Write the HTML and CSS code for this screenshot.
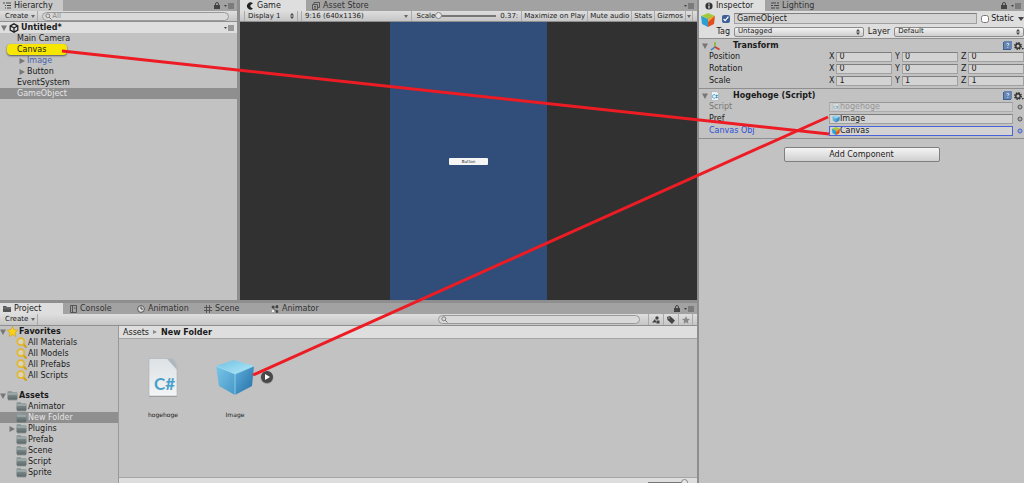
FILE: index.html
```html
<!DOCTYPE html>
<html lang="en">

<head>
    <meta charset="UTF-8" />
    <meta name="viewport" content="width=device-width, initial-scale=1.0" />
    <title>Untitled - Editor</title>
    <link rel="stylesheet" href="styles.css">
</head>

<body>
    <svg class="defs" width="0" height="0" aria-hidden="true">
        <defs>
            <linearGradient id="folderFill" x1="0" y1="0" x2="0" y2="1">
                <stop offset="0" stop-color="#94a0a0" />
                <stop offset="1" stop-color="#5d6a6b" />
            </linearGradient>
            <linearGradient id="cubeTop" x1="0" y1="0" x2="1" y2="1">
                <stop offset="0" stop-color="#6fbfe2" />
                <stop offset="1" stop-color="#b4ebfa" />
            </linearGradient>
            <linearGradient id="cubeLeft" x1="0" y1="0" x2="1" y2="1">
                <stop offset="0" stop-color="#79c6e8" />
                <stop offset="1" stop-color="#4797c7" />
            </linearGradient>
            <linearGradient id="cubeRight" x1="0" y1="0" x2="1" y2="1">
                <stop offset="0" stop-color="#5cb2df" />
                <stop offset="1" stop-color="#266ca3" />
            </linearGradient>
            <linearGradient id="paper" x1="0" y1="0" x2="0" y2="1">
                <stop offset="0" stop-color="#dde2e6" />
                <stop offset="1" stop-color="#f3f4f5" />
            </linearGradient>
        </defs>
        <symbol id="lock" viewBox="0 0 6 7">
            <path d="M1.500 3V2a1.500 1.500 0 0 1 3 0v1" fill="none" stroke="#444" />
            <path d="M0 3h6v4H0z" fill="#444" />
        </symbol>
        <symbol id="menu" viewBox="0 0 10 6">
            <path d="M0 2h3L1.500 4z" fill="#444" />
            <path d="M4 1h6M4 3h6M4 5h6" stroke="#555" />
        </symbol>
        <symbol id="down" viewBox="0 0 4 3">
            <path d="M0 0h4L2 3z" fill="#666" />
        </symbol>
        <symbol id="updown" viewBox="0 0 4 6">
            <path d="M0 2.500 2 0l2 2.500zM0 3.500h4L2 6z" fill="#444" />
        </symbol>
        <symbol id="foldOpen" viewBox="0 0 6 6">
            <path d="M0 .5h6L3 6z" fill="#777" />
        </symbol>
        <symbol id="foldClosed" viewBox="0 0 6 6">
            <path d="M.5 0v6L6 3z" fill="#777" />
        </symbol>
        <symbol id="folder" viewBox="0 0 11 10">
            <path d="M.5 1.500q0-1 1-1h3l1 1.200h4q1 0 1 1V8q0 1-1 1h-8q-1 0-1-1z" fill="url(#folderFill)" />
            <path d="M1 3.500h9" stroke="#b4bebe" />
            <path d="M1 9.300h9" stroke="#4c5757" stroke-width=".6" />
        </symbol>
        <symbol id="find" viewBox="0 0 11 11">
            <path d="m7.500 7.500 2.500 2.500" stroke="#d2a21c" stroke-width="2.200" stroke-linecap="round" />
            <circle cx="4.800" cy="4.600" r="3.500" fill="#d8d4bd" stroke="#e3b62c" stroke-width="1.700" />
        </symbol>
        <symbol id="lens" viewBox="0 0 7 7">
            <circle cx="2.800" cy="2.800" r="2" fill="none" stroke="#777" stroke-width=".9" />
            <path d="m4.300 4.300 2.200 2.200" stroke="#777" />
        </symbol>
        <symbol id="blueCube" viewBox="0 0 40 38">
            <path d="M1 7 19 1l20 6-19 8z" fill="url(#cubeTop)" />
            <path d="m1 7 19 8v21L4 27z" fill="url(#cubeLeft)" />
            <path d="m39 7-19 8v21l17-9z" fill="url(#cubeRight)" />
            <path d="m1 7 19 8 19-8M20 15v21" fill="none" stroke="#a5e0f5" stroke-width=".7" />
        </symbol>
        <symbol id="rgbCube" viewBox="0 0 14 14">
            <path d="M0 3 7 0l7 3-7 3z" fill="#a5c93c" />
            <path d="m0 3 7 3v8l-6-3z" fill="#2d9fd0" />
            <path d="m14 3-7 3v8l6-3z" fill="#e0501c" />
            <path d="m14 3-7 3v3z" fill="#f2a83a" />
        </symbol>
        <symbol id="script" viewBox="0 0 10 11">
            <path d="M1 .5h6l2 2v8H1z" fill="#eef2f4" stroke="#a0a8ac" stroke-width=".7" />
            <path d="M5 4.200a2 2 0 1 0 0 3.600M5.500 5h3M5.500 7h3M6.500 4v4" fill="none" stroke="#2f8fc0" stroke-width=".9" />
        </symbol>
        <symbol id="help" viewBox="0 0 9 9">
            <path d="M0 1h8v8H0z" fill="#3f5f8c" />
            <path d="M1 0h8v8H1z" fill="#6685b2" />
            <path d="M3.500 3q1.500-1.500 2.500 0 0 1-1.200 1.500v.6M4.800 6v.8" fill="none" stroke="#dfe8f4" stroke-width=".9" />
        </symbol>
        <symbol id="gear" viewBox="0 0 10 8">
            <circle cx="4" cy="4" r="3.200" fill="none" stroke="#333" stroke-width="1.500" stroke-dasharray="1.500 1" />
            <circle cx="4" cy="4" r="2.200" fill="none" stroke="#333" stroke-width="1.400" />
            <path d="M7.500 6H10L8.800 7.800z" fill="#333" />
        </symbol>
        <symbol id="pick" viewBox="0 0 6 6">
            <circle cx="3" cy="3" r="2" fill="none" stroke="currentColor" stroke-width=".9" />
            <circle cx="3" cy="3" r=".5" fill="currentColor" />
        </symbol>
    </svg>

    <main class="editor">
        <div class="left">
            <div class="top">
                <section class="panel hierarchy">
                    <div class="tabs">
                        <button class="tab active">
                            <svg width="8" height="7"><path d="M0 1h2M3 1h5M2 3.500h1M4 3.500h4M2 6h1M4 6h4" stroke="#444" /></svg>
                            Hierarchy
                        </button>
                        <svg class="lock"><use href="#lock" /></svg>
                        <svg class="menu"><use href="#menu" /></svg>
                    </div>
                    <div class="toolbar">
                        <button class="tool">Create <svg class="down"><use href="#down" /></svg></button>
                        <label class="search">
                            <svg class="lens"><use href="#lens" /></svg>
                            <input type="text" placeholder="All" aria-label="Search hierarchy" />
                        </label>
                    </div>
                    <div class="scene-row">
                        <svg class="fold"><use href="#foldOpen" /></svg>
                        <svg width="10" height="10" viewBox="0 0 10 10">
                            <path d="M5 .8 8.800 2.800v4.400L5 9.200 1.200 7.200V2.800zM5 5V9M5 5 1.500 3M5 5l3.500-2" fill="none" stroke="#222" stroke-width="1.300" />
                        </svg>
                        <b>Untitled*</b>
                        <svg class="menu"><use href="#menu" /></svg>
                    </div>
                    <ul class="tree">
                        <li>Main Camera</li>
                        <li><span class="marked">Canvas</span></li>
                        <li class="child prefab"><svg class="fold"><use href="#foldClosed" /></svg>Image</li>
                        <li class="child"><svg class="fold"><use href="#foldClosed" /></svg>Button</li>
                        <li>EventSystem</li>
                        <li class="selected">GameObject</li>
                    </ul>
                </section>

                <section class="panel game">
                    <div class="tabs">
                        <button class="tab active">
                            <svg width="8" height="8" viewBox="0 0 8 8"><path d="M7 1.300A3.600 3.600 0 1 0 7 6.700L4.500 5V3z" fill="#222" /></svg>
                            Game
                        </button>
                        <button class="tab">
                            <svg width="8" height="8" viewBox="0 0 8 8"><path d="M.5 2.500h5v5h-5zM2 2.500v-2h5.500v5h-2M2 4.500h2M2 6h2" fill="none" stroke="#555" /></svg>
                            Asset Store
                        </button>
                        <svg class="menu"><use href="#menu" /></svg>
                    </div>
                    <div class="toolbar">
                        <span class="drop display">
                            <select aria-label="Display"><option>Display 1</option></select>
                            <svg class="updown"><use href="#updown" /></svg>
                        </span>
                        <span class="drop aspect">
                            <select aria-label="Aspect"><option>9:16 (640x1136)</option></select>
                            <svg class="down"><use href="#down" /></svg>
                        </span>
                        <label class="scale">Scale <input type="range" min="0" max="10" value="0" /></label>
                        <span class="scale-value">0.37:</span>
                        <button class="tool">Maximize on Play</button>
                        <button class="tool">Mute audio</button>
                        <button class="tool">Stats</button>
                        <button class="tool">Gizmos</button>
                        <button class="tool last" aria-label="Gizmos menu"><svg class="down"><use href="#down" /></svg></button>
                    </div>
                    <div class="view">
                        <div class="screen">
                            <button class="ui-button">Button</button>
                        </div>
                    </div>
                </section>
            </div>

            <section class="panel project">
                <div class="tabs">
                    <button class="tab active">
                        <svg width="8" height="7" viewBox="0 0 8 7"><path d="M0 1h3l1 1h4v5H0z" fill="#555" /><path d="M0 3h8" stroke="#999" stroke-width=".6" /></svg>
                        Project
                    </button>
                    <button class="tab">
                        <svg width="7" height="8" viewBox="0 0 7 8"><path d="M.5.5h6v7h-6zM2.500.5v7M4 3h1.500" fill="none" stroke="#555" /></svg>
                        Console
                    </button>
                    <button class="tab">
                        <svg width="8" height="8" viewBox="0 0 8 8"><circle cx="4" cy="4" r="3.400" fill="#ddd" stroke="#555" /><path d="M4 1.500V4h2" fill="none" stroke="#444" /></svg>
                        Animation
                    </button>
                    <button class="tab">
                        <svg width="8" height="8" viewBox="0 0 8 8"><path d="M2.500 0v8M5.500 0v8M0 2.500h8M0 5.500h8" stroke="#555" /></svg>
                        Scene
                    </button>
                    <button class="tab">
                        <svg width="8" height="8" viewBox="0 0 8 8"><path d="M1 1h2v2H1zM5 .5h2V3H5zM5 5.500h2v2H5z" fill="#444" stroke="#444" stroke-width=".5" /><path d="M1 5h2v2H1z" fill="#eee" /><path d="M3 2h2M2 3l4 3.500" stroke="#444" stroke-width=".7" /></svg>
                        Animator
                    </button>
                    <svg class="lock"><use href="#lock" /></svg>
                    <svg class="menu"><use href="#menu" /></svg>
                </div>
                <div class="toolbar">
                    <button class="tool">Create <svg class="down"><use href="#down" /></svg></button>
                    <label class="search project-search">
                        <svg class="lens"><use href="#lens" /></svg>
                        <input type="text" aria-label="Search project" />
                    </label>
                    <button class="tool icon" aria-label="Filter by type">
                        <svg width="8" height="8" viewBox="0 0 8 8"><circle cx="5" cy="2" r="1.700" fill="#444" /><path d="M0 6.500 3 3l1.500 3.500zM4.500 4.500h3v3h-3z" fill="#444" /></svg>
                    </button>
                    <button class="tool icon" aria-label="Filter by label">
                        <svg width="8" height="8" viewBox="0 0 8 8"><path d="M0 1 3 0l5 4.500-3 3.500L.5 4z" fill="#444" /><circle cx="2" cy="2" r=".7" fill="#ccc" /></svg>
                    </button>
                    <button class="tool icon last" aria-label="Save search">
                        <svg width="8" height="8" viewBox="0 0 10 10"><path d="m5 0 1.400 3.400 3.600.3-2.700 2.400.8 3.600L5 7.800 1.900 9.700l.8-3.600L0 3.700l3.600-.3z" fill="#888" /></svg>
                    </button>
                </div>
                <div class="browser">
                    <div class="folders">
                        <ul class="tree">
                            <li class="root">
                                <svg class="fold"><use href="#foldOpen" /></svg>
                                <svg class="icon" viewBox="0 0 10 10"><path d="m5 .3 1.400 3.100 3.400.4-2.500 2.300.7 3.500L5 7.900 2 9.600l.7-3.500L.2 3.800l3.400-.4z" fill="#fbd21c" stroke="#c99a12" stroke-width=".5" /></svg>
                                <b>Favorites</b>
                            </li>
                            <li><svg class="icon"><use href="#find" /></svg>All Materials</li>
                            <li><svg class="icon"><use href="#find" /></svg>All Models</li>
                            <li><svg class="icon"><use href="#find" /></svg>All Prefabs</li>
                            <li><svg class="icon"><use href="#find" /></svg>All Scripts</li>
                        </ul>
                        <ul class="tree">
                            <li class="root">
                                <svg class="fold"><use href="#foldOpen" /></svg>
                                <svg class="icon"><use href="#folder" /></svg>
                                <b>Assets</b>
                            </li>
                            <li><svg class="icon"><use href="#folder" /></svg>Animator</li>
                            <li class="selected"><svg class="icon"><use href="#folder" /></svg>New Folder</li>
                            <li class="nested"><svg class="fold"><use href="#foldClosed" /></svg><svg class="icon"><use href="#folder" /></svg>Plugins</li>
                            <li><svg class="icon"><use href="#folder" /></svg>Prefab</li>
                            <li><svg class="icon"><use href="#folder" /></svg>Scene</li>
                            <li><svg class="icon"><use href="#folder" /></svg>Script</li>
                            <li><svg class="icon"><use href="#folder" /></svg>Sprite</li>
                        </ul>
                    </div>
                    <div class="files">
                        <nav class="crumbs">
                            <span>Assets</span>
                            <svg width="4" height="4" viewBox="0 0 4 4"><path d="M0 0v4l4-2z" fill="#888" /></svg>
                            <b>New Folder</b>
                        </nav>
                        <div class="grid">
                            <figure class="file">
                                <svg class="thumb" viewBox="0 0 40 40">
                                    <path d="M6 1h23l5 6v32H6z" fill="#999" />
                                    <path d="M6 .5h24l4 6v31.500H6z" fill="url(#paper)" stroke="#aab0b3" stroke-width=".6" />
                                    <path d="M24 .8h6l3.800 6v5z" fill="#aeb8be" />
                                    <text class="sharp" x="11" y="32">C#</text>
                                </svg>
                                <figcaption>hogehoge</figcaption>
                            </figure>
                            <figure class="file">
                                <svg class="thumb"><use href="#blueCube" /></svg>
                                <button class="expand" aria-label="Expand">
                                    <svg width="14" height="14" viewBox="0 0 14 14"><circle cx="7" cy="7.500" r="6.500" fill="#999" /><circle cx="7" cy="7" r="6" fill="#484848" /><path d="M5 4v6l5-3z" fill="#fff" /></svg>
                                </button>
                                <figcaption>Image</figcaption>
                            </figure>
                        </div>
                        <div class="status">
                            <input type="range" value="100" aria-label="Icon size" />
                        </div>
                    </div>
                </div>
            </section>
        </div>

        <section class="panel inspector">
            <div class="tabs">
                <button class="tab active">
                    <svg width="8" height="8" viewBox="0 0 8 8"><circle cx="4" cy="4" r="3.600" fill="#333" /><path d="M4 1.500v1.200M4 3.500v3" stroke="#eee" stroke-width="1.200" /></svg>
                    Inspector
                </button>
                <button class="tab">
                    <svg width="8" height="7"><path d="M0 1h5M6 1h2M0 3.500h2M3 3.500h5M0 6h4M5 6h3" stroke="#444" /></svg>
                    Lighting
                </button>
                <svg class="lock"><use href="#lock" /></svg>
                <svg class="menu"><use href="#menu" /></svg>
            </div>
            <div class="object">
                <svg class="object-icon" viewBox="0 0 14 14"><use href="#rgbCube" /></svg>
                <div class="object-fields">
                    <div class="object-row">
                        <span class="lead"><input type="checkbox" checked aria-label="Active" /></span>
                        <input class="field name" type="text" value="GameObject" aria-label="Name" />
                        <label class="static"><input type="checkbox" /> Static</label>
                        <svg width="6" height="4" viewBox="0 0 6 4"><path d="M0 0h6L3 4z" fill="#444" /></svg>
                    </div>
                    <div class="object-row">
                        <label class="lead" for="tag">Tag</label>
                        <span class="drop boxed">
                            <select id="tag"><option>Untagged</option></select>
                            <svg class="updown"><use href="#updown" /></svg>
                        </span>
                        <label for="layer">Layer</label>
                        <span class="drop boxed">
                            <select id="layer"><option>Default</option></select>
                            <svg class="updown"><use href="#updown" /></svg>
                        </span>
                    </div>
                </div>
            </div>

            <div class="component">
                <h2>
                    <svg class="fold"><use href="#foldOpen" /></svg>
                    <svg width="10" height="10" viewBox="0 0 10 10"><path d="M5 6V1" stroke="#7ab81c" stroke-width="1.500" /><path d="M5 6 1 9" stroke="#2a7fd0" stroke-width="1.500" /><path d="m5 6 4.500 2.500" stroke="#d8341c" stroke-width="1.500" /></svg>
                    <span>Transform</span>
                    <svg class="help"><use href="#help" /></svg>
                    <svg class="gear"><use href="#gear" /></svg>
                </h2>
                <div class="prop">
                    <span>Position</span>
                    <div class="xyz">
                        <label>X <input class="field" type="text" value="0" /></label>
                        <label>Y <input class="field" type="text" value="0" /></label>
                        <label>Z <input class="field" type="text" value="0" /></label>
                    </div>
                </div>
                <div class="prop">
                    <span>Rotation</span>
                    <div class="xyz">
                        <label>X <input class="field" type="text" value="0" /></label>
                        <label>Y <input class="field" type="text" value="0" /></label>
                        <label>Z <input class="field" type="text" value="0" /></label>
                    </div>
                </div>
                <div class="prop">
                    <span>Scale</span>
                    <div class="xyz">
                        <label>X <input class="field" type="text" value="1" /></label>
                        <label>Y <input class="field" type="text" value="1" /></label>
                        <label>Z <input class="field" type="text" value="1" /></label>
                    </div>
                </div>
            </div>

            <div class="component">
                <h2>
                    <svg class="fold"><use href="#foldOpen" /></svg>
                    <svg width="10" height="10"><use href="#script" /></svg>
                    <span>Hogehoge (Script)</span>
                    <svg class="help"><use href="#help" /></svg>
                    <svg class="gear"><use href="#gear" /></svg>
                </h2>
                <div class="prop disabled">
                    <label for="script-ref">Script</label>
                    <div class="ref">
                        <span class="field"><svg width="8" height="8"><use href="#script" /></svg><input id="script-ref" type="text" value="hogehoge" disabled /></span>
                        <svg class="pick"><use href="#pick" /></svg>
                    </div>
                </div>
                <div class="prop">
                    <label for="pref">Pref</label>
                    <div class="ref">
                        <span class="field"><svg width="8" height="8"><use href="#blueCube" /></svg><input id="pref" type="text" value="Image" /></span>
                        <svg class="pick"><use href="#pick" /></svg>
                    </div>
                </div>
                <div class="prop focused">
                    <label for="canvas-obj">Canvas Obj</label>
                    <div class="ref">
                        <span class="field"><svg width="8" height="8"><use href="#rgbCube" /></svg><input id="canvas-obj" type="text" value="Canvas" /></span>
                        <svg class="pick"><use href="#pick" /></svg>
                    </div>
                </div>
            </div>

            <button class="add">Add Component</button>
        </section>

        <!-- drag lines from the objects to the script fields -->
        <svg class="links" viewBox="0 0 1024 483" preserveAspectRatio="none">
            <path d="M62 51 829 134M253 375 828 117" />
        </svg>
    </main>
</body>

</html>
```
FILE: styles.css
```css
* {
    box-sizing: border-box;
}

body {
    margin: 0;
    font-family: "DejaVu Sans", Verdana, sans-serif;
    font-size: 8px;
    line-height: 11px;
    color: #1a1a1a;
    background: #8e8e8e;
}

button,
input,
select {
    font: inherit;
    color: inherit;
    margin: 0;
    padding: 0;
    border: 0;
    background: none;
    border-radius: 0;
}

input[type="text"] {
    min-width: 0;
    line-height: 8px;
    outline: none;
}

svg {
    flex: none;
    display: block;
}

.defs {
    position: absolute;
}

.editor {
    position: relative;
    display: grid;
    grid-template-columns: minmax(0, 697fr) minmax(0, 325fr);
    gap: 2px;
    height: 100vh;
    overflow: hidden;
}

.left {
    display: grid;
    grid-template-rows: minmax(0, 300fr) minmax(0, 180fr);
    gap: 3px;
    min-height: 0;
}

.top {
    display: grid;
    grid-template-columns: minmax(0, 237fr) minmax(0, 457fr);
    gap: 3px;
}

.panel {
    display: flex;
    flex-direction: column;
    min-width: 0;
    min-height: 0;
    background: #c2c2c2;
}

/* Tabs */
.tabs {
    display: flex;
    align-items: center;
    height: 11px;
    padding-right: 3px;
    background: #a2a2a2;
}

.tab {
    display: flex;
    align-items: center;
    gap: 3px;
    height: 11px;
    padding: 0 14px 0 5px;
    color: #333;
    white-space: nowrap;
}

.tab.active {
    background: #dedede;
    color: #222;
}

.hierarchy .tab.active {
    width: 63px;
    padding: 0 3px;
    background: #c8c8c8;
}

.game .tab.active,
.inspector .tab.active {
    width: 66px;
}

.game .tab,
.inspector .tab {
    padding-left: 6px;
}

.project .tab {
    width: 67px;
    padding: 0 3px;
}

.project .tab.active {
    width: 63px;
}

.project .tab:nth-child(2) {
    margin-left: 4px;
}

.lock {
    width: 6px;
    height: 7px;
    margin-left: auto;
    margin-right: 4px;
}

.menu {
    width: 10px;
    height: 6px;
}

.game .menu,
.scene-row .menu {
    margin-left: auto;
}

/* Toolbars */
.toolbar {
    display: flex;
    align-items: center;
    height: 11px;
    font-size: 7px;
    background: linear-gradient(#dedede, #c6c6c6);
    border-bottom: 1px solid #8f8f8f;
}

.tool {
    display: flex;
    align-items: center;
    justify-content: center;
    gap: 3px;
    height: 10px;
    padding: 0 2px;
    border-left: 1px solid #aaa;
    white-space: nowrap;
}

.tool.last,
.tool:first-child {
    border-right: 1px solid #aaa;
}

.tool:first-child {
    border-left: 0;
    padding-left: 5px;
}

.down {
    width: 4px;
    height: 3px;
}

.updown {
    width: 4px;
    height: 6px;
}

.search {
    display: flex;
    align-items: center;
    flex: 1;
    height: 9px;
    margin: 0 8px 0 4px;
    padding: 0 2px;
    border: 1px solid #999;
    border-radius: 5px;
    background: #d9d9d9;
}

.search input {
    flex: 1;
    height: 7px;
}

.search input::placeholder {
    color: #888;
}

.lens {
    width: 7px;
    height: 7px;
}

/* Hierarchy */
.scene-row {
    display: flex;
    align-items: center;
    gap: 2px;
    height: 11px;
    padding: 0 3px 0 1px;
    background: #dedede;
}

.fold {
    width: 6px;
    height: 6px;
}

.tree {
    margin: 0;
    padding: 0;
    list-style: none;
}

.tree li {
    display: flex;
    align-items: center;
    height: 11px;
    padding-left: 17px;
    white-space: nowrap;
}

.tree .child {
    gap: 2px;
    padding-left: 19px;
}

.tree .prefab {
    color: #4a66a8;
}

.tree .selected {
    background: #8f8f8f;
    color: #e6e6e6;
}

.marked {
    width: 60px;
    margin-left: -10px;
    padding-left: 10px;
    border-radius: 4px;
    background: #f6e600;
    box-shadow: 0 1px 2px #555;
}

/* Game */
.game .toolbar {
    padding: 0 4px;
}

.game .tool.last {
    width: 8px;
    padding: 0;
}

.drop {
    display: flex;
    align-items: center;
    min-width: 0;
}

.drop select {
    flex: 1;
    min-width: 0;
    appearance: none;
    outline: none;
}

.display {
    width: 54px;
    height: 10px;
    padding: 0 3px;
    border: 1px solid #aaa;
    border-width: 0 1px;
}

.aspect {
    flex: 1;
    height: 10px;
    margin-left: 3px;
    padding: 0 3px;
    border: 1px solid #aaa;
    border-width: 0 1px;
}

.scale {
    display: flex;
    align-items: center;
    padding-left: 4px;
}

input[type="range"] {
    width: 61px;
    height: 7px;
    appearance: none;
}

input[type="range"]::-webkit-slider-runnable-track {
    height: 2px;
    background: #777;
}

input[type="range"]::-webkit-slider-thumb {
    appearance: none;
    width: 7px;
    height: 7px;
    margin-top: -3px;
    border: 1px solid #888;
    border-radius: 50%;
    background: #e6e6e6;
}

.scale-value {
    padding: 0 3px 0 4px;
}

.view {
    flex: 1;
    display: flex;
    justify-content: center;
    min-height: 0;
    background: #313131;
}

.screen {
    display: flex;
    align-items: center;
    justify-content: center;
    height: 100%;
    aspect-ratio: 9 / 16;
    background: #314d79;
}

.ui-button {
    width: 25%;
    height: 7px;
    border-radius: 1px;
    background: #f5f5f5;
    font-size: 4px;
    line-height: 7px;
}

/* Project */
.project .toolbar {
    height: 12px;
    padding-right: 4px;
}

.project .tool {
    height: 11px;
}

.project .tool.icon {
    width: 15px;
}

.project-search {
    flex: 0 1 202px;
    margin-left: auto;
}

.browser {
    flex: 1;
    display: grid;
    grid-template-columns: minmax(0, 119fr) minmax(0, 578fr);
    min-height: 0;
}

.folders {
    overflow: hidden;
    border-right: 1px solid #999;
}

.folders .tree + .tree {
    margin-top: 9px;
}

.folders .tree li {
    gap: 1px;
    padding-left: 16px;
}

.folders .tree .root {
    padding-left: 0;
}

.folders .tree .nested {
    padding-left: 9px;
}

.tree .icon {
    width: 11px;
    height: 11px;
}

.files {
    display: flex;
    flex-direction: column;
    min-width: 0;
    min-height: 0;
}

.crumbs {
    display: flex;
    align-items: center;
    gap: 4px;
    height: 13px;
    padding-left: 4px;
    background: #dedede;
    border-bottom: 1px solid #a5a5a5;
}

.grid {
    flex: 1;
    display: flex;
    gap: 32px;
    padding: 19px 24px;
}

.file {
    position: relative;
    display: flex;
    flex-direction: column;
    align-items: center;
    gap: 12px;
    width: 40px;
    margin: 0;
    font-size: 6px;
    line-height: 9px;
}

.thumb {
    width: 40px;
    height: 40px;
}

.sharp {
    font-family: Lato, "Open Sans", sans-serif;
    font-size: 17px;
    font-weight: bold;
    fill: #4a9fcd;
}

.expand {
    position: absolute;
    left: 45px;
    top: 12px;
}

.status {
    display: flex;
    justify-content: flex-end;
    height: 6px;
    padding-right: 9px;
    background: #dedede;
    border-top: 1px solid #a5a5a5;
}

.status input {
    width: 40px;
    margin-top: 1px;
}

/* Inspector */
.object {
    display: flex;
    gap: 3px;
    padding: 2px 0 1px 2px;
    background: #dedede;
}

.object-icon {
    width: 14px;
    height: 14px;
}

.object-fields {
    flex: 1;
    display: flex;
    flex-direction: column;
    gap: 2px;
    min-width: 0;
}

.object-row {
    display: flex;
    align-items: center;
    gap: 4px;
    height: 11px;
}

.lead {
    display: flex;
    justify-content: flex-end;
    width: 12px;
}

.object-row input[type="checkbox"] {
    width: 8px;
    height: 8px;
    accent-color: #3c5f96;
}

.field {
    height: 10px;
    padding: 0 2px;
    border: 1px solid #a0a0a0;
    border-top-color: #7d7d7d;
    background: #d3d3d3;
}

.field.name {
    flex: 1;
    height: 11px;
}

.static {
    display: flex;
    align-items: center;
    gap: 2px;
}

.boxed {
    flex: 1;
    height: 10px;
    padding: 0 3px;
    border: 1px solid #8c8c8c;
    border-radius: 2px;
    background: linear-gradient(#f2f2f2, #cfcfcf);
    font-size: 7px;
}

.component {
    padding: 1px 0 1px 2px;
    border-top: 1px solid #8f8f8f;
}

.component h2 {
    display: flex;
    align-items: center;
    gap: 2px;
    height: 11px;
    margin: 0;
    padding-left: 1px;
    font-size: 8px;
}

.component h2 span {
    flex: 1;
    padding-left: 11px;
}

.help {
    width: 9px;
    height: 9px;
}

.gear {
    width: 10px;
    height: 8px;
}

.prop {
    display: grid;
    grid-template-columns: minmax(0, 120fr) minmax(0, 195fr);
    align-items: center;
    height: 10px;
    margin-bottom: 2px;
    padding-left: 8px;
}

.xyz {
    display: grid;
    grid-template-columns: 1fr 1fr 1fr;
    gap: 3px;
}

.xyz label {
    display: flex;
    align-items: center;
    gap: 2px;
    min-width: 0;
}

.xyz .field {
    flex: 1;
}

.ref {
    display: flex;
    align-items: center;
    gap: 4px;
    padding-right: 1px;
}

.ref .field {
    flex: 1;
    display: flex;
    align-items: center;
    min-width: 0;
}

.ref input {
    flex: 1;
    height: 8px;
}

.pick {
    width: 6px;
    height: 6px;
    color: #444;
}

.disabled {
    color: #777;
}

.disabled .field {
    opacity: 0.6;
}

.focused label,
.focused .pick {
    color: #2b50d8;
}

.focused .field {
    border-color: #4a62d8;
}

.add {
    align-self: center;
    width: 48%;
    height: 15px;
    margin-top: 8px;
    border: 1px solid #7f7f7f;
    border-radius: 2px;
    background: linear-gradient(#f4f4f4, #cfcfcf);
    font-size: 8px;
}

.component:nth-last-child(2) {
    border-bottom: 1px solid #8f8f8f;
}

/* Drag lines */
.links {
    position: absolute;
    inset: 0;
    width: 100%;
    height: 100%;
    pointer-events: none;
}

.links path {
    fill: none;
    stroke: #ed1c24;
    stroke-width: 3;
}
```
